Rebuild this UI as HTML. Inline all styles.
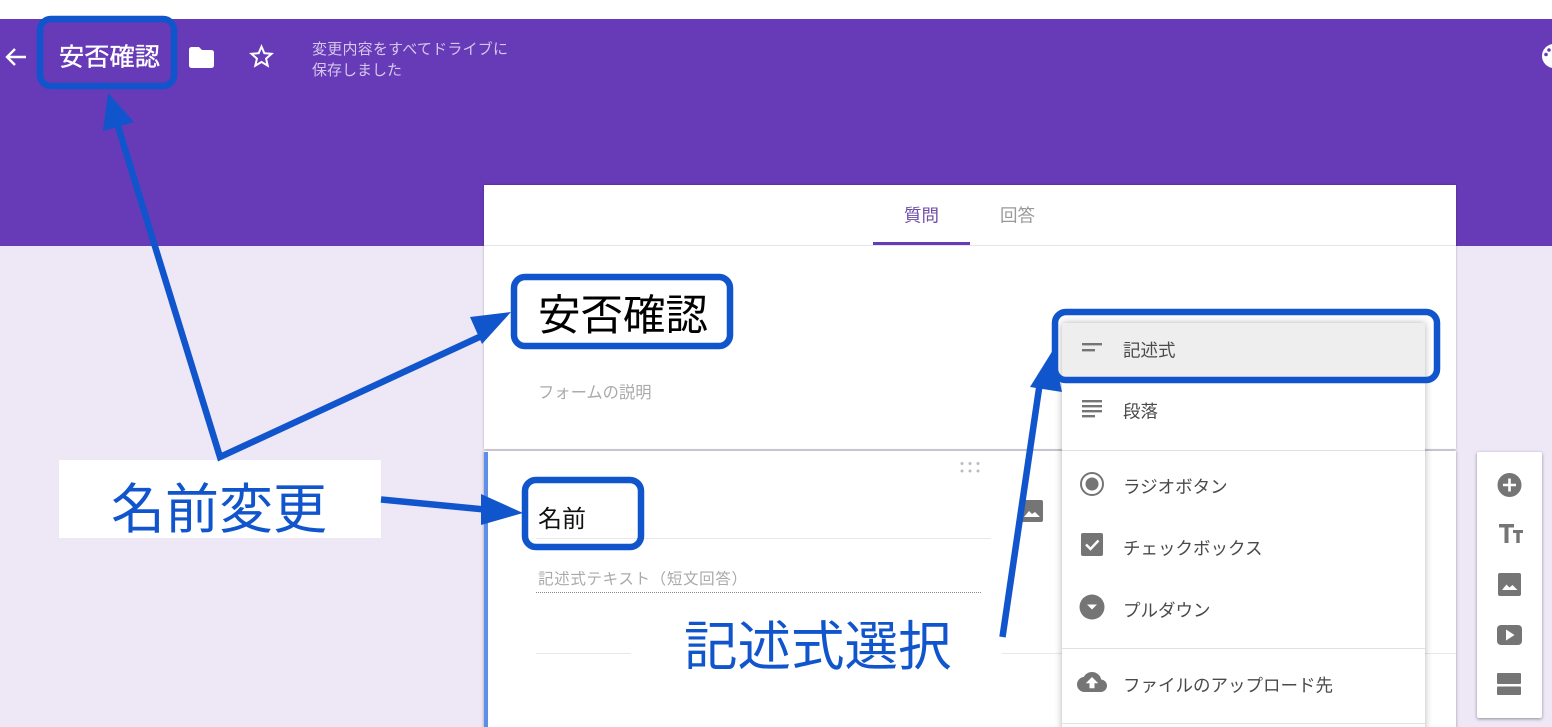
<!DOCTYPE html>
<html lang="ja"><head><meta charset="utf-8"><title>安否確認</title>
<style>
html,body{margin:0;padding:0;background:#fff}
#p{position:relative;width:1552px;height:727px;overflow:hidden;background:#ede7f6;font-family:"Liberation Sans","Noto Sans CJK JP",sans-serif}
#p>div{position:absolute}
svg{position:absolute;left:0;top:0}
text{font-family:"Liberation Sans","Noto Sans CJK JP",sans-serif}
</style></head><body><div id="p">
<div style="left:0;top:0;width:1552px;height:19px;background:#fff"></div>
<div style="left:0;top:19px;width:1552px;height:227px;background:#673ab7"></div>
<div style="left:484px;top:185px;width:972px;height:264px;background:#fff;box-shadow:0 0 2px rgba(0,0,0,.3)"></div>
<div style="left:484px;top:245px;width:972px;height:1px;background:#e6e3ec"></div>
<div style="left:873px;top:242px;width:97px;height:3px;background:#673ab7"></div>
<div style="left:484px;top:451px;width:972px;height:290px;background:#fff;box-shadow:0 0 3px rgba(0,0,0,.35)"></div>
<div style="left:484px;top:452px;width:4px;height:290px;background:#5b8fea"></div>
<div style="left:536px;top:538px;width:455px;height:1px;background:#e8e8e8"></div>
<div style="left:536px;top:592px;width:445px;height:0;border-top:1px dotted #888"></div>
<div style="left:536px;top:653px;width:95px;height:1px;background:#e8e8e8"></div>
<div style="left:1002px;top:653px;width:454px;height:1px;background:#e8e8e8"></div>
<div style="left:1477px;top:452px;width:65px;height:266px;background:#fff;border-radius:2px;box-shadow:0 1px 3px rgba(0,0,0,.4)"></div>
<div style="left:1062px;top:323px;width:363px;height:420px;background:#fff;box-shadow:0 0 7px rgba(0,0,0,.3)"></div>
<div style="left:1062px;top:323px;width:363px;height:56px;background:#eee"></div>
<div style="left:1062px;top:450px;width:363px;height:1px;background:#e0e0e0"></div>
<div style="left:1062px;top:648px;width:363px;height:1px;background:#e0e0e0"></div>
<div style="left:1062px;top:723px;width:363px;height:1px;background:#e0e0e0"></div>
<div style="left:59px;top:460px;width:322px;height:78px;background:#fff"></div>

<svg width="1552" height="727" viewBox="0 0 1552 727">
<!-- header -->
<path d="M26 57H8M15 49l-8 8 8 8" fill="none" stroke="#fff" stroke-width="2.400"/>
<path d="M192 47h7l3 3h9.500a2.500 2.500 0 0 1 2.500 2.500v13a2.500 2.500 0 0 1-2.500 2.500h-20a2.500 2.500 0 0 1-2.500-2.500v-16a2.500 2.500 0 0 1 2.500-2.500z" fill="#fff"/>
<path transform="translate(246.500 41.500) scale(1.250)" fill="#fff" d="M22 9.240l-7.190-.62L12 2 9.190 8.630 2 9.240l5.460 4.730L5.820 21 12 17.270 18.180 21l-1.630-7.030L22 9.240zM12 15.400l-3.760 2.270 1-4.280-3.320-2.880 4.380-.38L12 6.100l1.710 4.040 4.380.38-3.320 2.880 1 4.280L12 15.400z"/>
<text x="59" y="65.500" font-size="25" fill="#fff" stroke="#fff" stroke-width=".35" textLength="101" lengthAdjust="spacingAndGlyphs">安否確認</text>
<text x="312" y="54" font-size="15" fill="#d6c8ec" textLength="196">変更内容をすべてドライブに</text>
<text x="312" y="75" font-size="15" fill="#d6c8ec" textLength="90">保存しました</text>
<circle cx="1554" cy="56" r="12" fill="#fff"/><circle cx="1549" cy="50" r="1.800" fill="#673ab7"/><circle cx="1546" cy="54.500" r="1.800" fill="#673ab7"/>
<!-- tabs and titles -->
<text x="904" y="221.500" font-size="17.500" fill="#6f4ba8">質問</text>
<text x="1000" y="221.500" font-size="17.500" fill="#999">回答</text>
<text x="538" y="330" font-size="42.500" fill="#000">安否確認</text>
<text x="538" y="398" font-size="16.300" fill="#aaa">フォームの説明</text>
<text x="538" y="527" font-size="24" fill="#111">名前</text>
<text x="538" y="584" font-size="15.500" fill="#aaa" textLength="209">記述式テキスト（短文回答）</text>
<g fill="#bbb"><circle cx="962" cy="463.500" r="1.500"/><circle cx="970" cy="463.500" r="1.500"/><circle cx="978" cy="463.500" r="1.500"/><circle cx="962" cy="471" r="1.500"/><circle cx="970" cy="471" r="1.500"/><circle cx="978" cy="471" r="1.500"/></g>
<rect x="1020" y="500" width="23" height="22" rx="2" fill="#757575"/><path d="M1024 517l5-6 3 3 3-2 5 5z" fill="#fff"/>
<!-- menu -->
<g fill="#757575">
<rect x="1082" y="343" width="20" height="2.400"/><rect x="1082" y="349" width="13" height="2.400"/>
<rect x="1082" y="400" width="20" height="2.400"/><rect x="1082" y="405" width="20" height="2.400"/><rect x="1082" y="410" width="20" height="2.400"/><rect x="1082" y="415" width="13" height="2.400"/>
<circle cx="1092" cy="484" r="6.500"/>
<rect x="1081" y="533" width="22" height="23" rx="2"/>
<circle cx="1092" cy="607" r="12.500"/>
<path transform="translate(1077 667) scale(1.250)" fill-rule="evenodd" d="M19.350 10.040A7.490 7.490 0 0 0 12 4C9.110 4 6.600 5.640 5.350 8.040A5.994 5.994 0 0 0 0 14c0 3.310 2.690 6 6 6h13c2.760 0 5-2.240 5-5 0-2.640-2.050-4.780-4.650-4.960zM14 13v4h-4v-4H7l5-5 5 5h-3z"/>
</g>
<circle cx="1092" cy="484" r="11" fill="none" stroke="#757575" stroke-width="2"/>
<path d="M1086 544.500l4.500 4.500 8-8.500" fill="none" stroke="#fff" stroke-width="2.400"/>
<path d="M1087 604.500h10l-5 5z" fill="#fff"/>
<g font-size="17.500" fill="#4a4a4a">
<text x="1123" y="356.500">記述式</text>
<text x="1123" y="417.500">段落</text>
<text x="1123" y="493">ラジオボタン</text>
<text x="1123" y="554.500">チェックボックス</text>
<text x="1123" y="616.500">プルダウン</text>
<text x="1123" y="691.500">ファイルのアップロード先</text>
</g>
<!-- sidebar -->
<circle cx="1509.500" cy="485" r="12" fill="#757575"/><path d="M1509.500 478.500v13M1503 485h13" stroke="#fff" stroke-width="2.600"/>
<path d="M1499 524h15v3.500h-5.500V543h-4V527.500H1499zM1513 530h10v3h-3.300v10h-3.400v-10H1513z" fill="#757575"/>
<rect x="1498" y="573" width="23" height="23" rx="2" fill="#757575"/><path d="M1502 590l4.500-5.500 3 3 3-2.500 5 5z" fill="#fff"/>
<rect x="1497" y="625" width="25" height="20" rx="4" fill="#757575"/><path d="M1506 629.500l8.500 5.500-8.500 5.500z" fill="#fff"/>
<rect x="1497" y="673" width="24" height="11" rx="1" fill="#757575"/><rect x="1497" y="686.500" width="24" height="8.500" rx="1" fill="#757575"/>
<!-- annotations -->
<g fill="none" stroke="#1155cc" stroke-width="6.500" stroke-linejoin="miter">
<rect x="40" y="19" width="134" height="67" rx="11"/>
<rect x="514" y="277" width="216" height="69" rx="11"/>
<rect x="525" y="480" width="116" height="67" rx="11"/>
<rect x="1055" y="312" width="382" height="68" rx="11"/>
<path d="M116 120L220 457 488 333"/>
<path d="M381 499.500L490 510" />
<path d="M1002.500 637L1041 375"/>
</g>
<g fill="#1155cc">
<path d="M108 93L134 122 103 131z"/>
<path d="M511 312L470 317 482 344z"/>
<path d="M523 513L481 494 481 525z"/>
<path d="M1053 350L1030 387 1062 392z"/>
</g>
<text x="111" y="528" font-size="54" fill="#1155cc">名前変更</text>
<text x="684" y="665" font-size="53.500" fill="#1155cc">記述式選択</text>
</svg>
</div></body></html>
